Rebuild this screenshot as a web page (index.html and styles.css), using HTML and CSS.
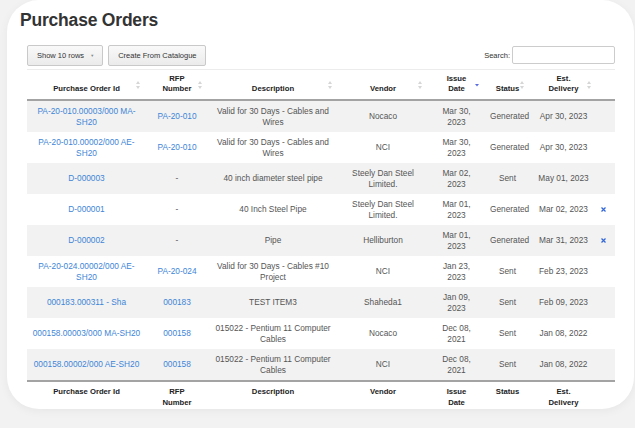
FILE: index.html
```html
<!DOCTYPE html>
<html>
<head>
<meta charset="utf-8">
<link rel="stylesheet" href="styles.css">
</head>
<body>
<div class="card">
  <h1 class="title">Purchase Orders</h1>
  <div class="toolbar">
    <div class="btns">
      <button class="btn">Show 10 rows <span class="caret">▼</span></button>
      <button class="btn">Create From Catalogue</button>
    </div>
    <label class="search">Search:<input type="text"></label>
  </div>
  <table class="grid">
    <colgroup>
      <col class="c1"><col class="c2"><col class="c3"><col class="c4"><col class="c5"><col class="c6"><col class="c7"><col class="c8">
    </colgroup>
    <thead>
      <tr>
        <th>Purchase Order Id<svg class="sort" viewBox="0 0 4 8"><path d="M2 0L4 3H0Z M2 8L4 5H0Z"/></svg></th>
        <th>RFP<br>Number<svg class="sort" viewBox="0 0 4 8"><path d="M2 0L4 3H0Z M2 8L4 5H0Z"/></svg></th>
        <th>Description<svg class="sort" viewBox="0 0 4 8"><path d="M2 0L4 3H0Z M2 8L4 5H0Z"/></svg></th>
        <th>Vendor<svg class="sort" viewBox="0 0 4 8"><path d="M2 0L4 3H0Z M2 8L4 5H0Z"/></svg></th>
        <th>Issue<br>Date<svg class="sort active" viewBox="0 0 4 8"><path d="M0 3H4L2 5.5Z"/></svg></th>
        <th>Status<svg class="sort" viewBox="0 0 4 8"><path d="M2 0L4 3H0Z M2 8L4 5H0Z"/></svg></th>
        <th>Est.<br>Delivery<svg class="sort" viewBox="0 0 4 8"><path d="M2 0L4 3H0Z M2 8L4 5H0Z"/></svg></th>
        <th></th>
      </tr>
    </thead>
    <tbody>
      <tr>
        <td><a>PA-20-010.00003/000 MA-SH20</a></td><td><a>PA-20-010</a></td>
        <td>Valid for 30 Days - Cables and Wires</td><td>Nocaco</td><td>Mar 30, 2023</td><td>Generated</td><td>Apr 30, 2023</td><td></td>
      </tr>
      <tr>
        <td><a>PA-20-010.00002/000 AE-SH20</a></td><td><a>PA-20-010</a></td>
        <td>Valid for 30 Days - Cables and Wires</td><td>NCI</td><td>Mar 30, 2023</td><td>Generated</td><td>Apr 30, 2023</td><td></td>
      </tr>
      <tr>
        <td><a>D-000003</a></td><td>-</td>
        <td>40 inch diameter steel pipe</td><td>Steely Dan Steel Limited.</td><td>Mar 02, 2023</td><td>Sent</td><td>May 01, 2023</td><td></td>
      </tr>
      <tr>
        <td><a>D-000001</a></td><td>-</td>
        <td>40 Inch Steel Pipe</td><td>Steely Dan Steel Limited.</td><td>Mar 01, 2023</td><td>Generated</td><td>Mar 02, 2023</td>
        <td><svg class="del" viewBox="0 0 6 6"><path d="M0.6 0.6L5.4 5.4M5.4 0.6L0.6 5.4"/></svg></td>
      </tr>
      <tr>
        <td><a>D-000002</a></td><td>-</td>
        <td>Pipe</td><td>Helliburton</td><td>Mar 01, 2023</td><td>Generated</td><td>Mar 31, 2023</td>
        <td><svg class="del" viewBox="0 0 6 6"><path d="M0.6 0.6L5.4 5.4M5.4 0.6L0.6 5.4"/></svg></td>
      </tr>
      <tr>
        <td><a>PA-20-024.00002/000 AE-SH20</a></td><td><a>PA-20-024</a></td>
        <td>Valid for 30 Days - Cables #10 Project</td><td>NCI</td><td>Jan 23, 2023</td><td>Sent</td><td>Feb 23, 2023</td><td></td>
      </tr>
      <tr>
        <td><a>000183.000311 - Sha</a></td><td><a>000183</a></td>
        <td>TEST ITEM3</td><td>Shaheda1</td><td>Jan 09, 2023</td><td>Sent</td><td>Feb 09, 2023</td><td></td>
      </tr>
      <tr>
        <td><a>000158.00003/000 MA-SH20</a></td><td><a>000158</a></td>
        <td>015022 - Pentium 11 Computer Cables</td><td>Nocaco</td><td>Dec 08, 2021</td><td>Sent</td><td>Jan 08, 2022</td><td></td>
      </tr>
      <tr>
        <td><a>000158.00002/000 AE-SH20</a></td><td><a>000158</a></td>
        <td>015022 - Pentium 11 Computer Cables</td><td>NCI</td><td>Dec 08, 2021</td><td>Sent</td><td>Jan 08, 2022</td><td></td>
      </tr>
    </tbody>
    <tfoot>
      <tr>
        <th>Purchase Order Id</th>
        <th>RFP<br>Number</th>
        <th>Description</th>
        <th>Vendor</th>
        <th>Issue<br>Date</th>
        <th>Status</th>
        <th>Est.<br>Delivery</th>
        <th></th>
      </tr>
    </tfoot>
  </table>
</div>
</body>
</html>
```
FILE: styles.css
```css
* { box-sizing: border-box; }
html, body { margin: 0; padding: 0; }
body {
  background: #f2f2f2;
  font-family: "Liberation Sans", Arial, sans-serif;
  width: 635px;
  height: 428px;
  overflow: hidden;
}
.card {
  margin-left: 7px;
  width: 627px;
  height: 409px;
  background: #fff;
  border-radius: 32px;
  box-shadow: 0 2px 10px rgba(0, 0, 0, 0.05);
  padding: 10px 19px 0 20px;
}
.title {
  margin: 0 0 0 -7px;
  font-size: 17.5px;
  line-height: 20px;
  font-weight: bold;
  color: #333;
  letter-spacing: -0.2px;
}
.toolbar {
  display: flex;
  justify-content: space-between;
  align-items: center;
  margin-top: 15px;
  height: 21px;
}
.btns { display: flex; gap: 5px; }
.btn {
  height: 21px;
  padding: 0 8px 0 9px;
  font-family: "Liberation Sans", Arial, sans-serif;
  font-size: 7.5px;
  color: #333;
  background: linear-gradient(#f9f9f9, #ebebeb);
  border: 1px solid #c9c9c9;
  border-radius: 2px;
}
.caret { font-size: 4px; color: #888; margin-left: 4px; vertical-align: 1px; }
.search {
  display: flex;
  align-items: center;
  gap: 2px;
  font-size: 7.5px;
  color: #333;
  margin-top: -1px;
}
.search input {
  width: 103px;
  height: 18px;
  border: 1px solid #ccc;
  border-radius: 2px;
  padding: 0;
  margin: 0;
}
.grid {
  margin-top: 3px;
  width: 588px;
  table-layout: fixed;
  border-collapse: separate;
  border-spacing: 0;
  border-top: 1px solid #ececec;
}
.c1 { width: 119px; }
.c2 { width: 62px; }
.c3 { width: 130px; }
.c4 { width: 90px; }
.c5 { width: 57px; }
.c6 { width: 45px; }
.c7 { width: 67px; }
.c8 { width: 18px; }
.grid th {
  position: relative;
  font-weight: bold;
  font-size: 7.7px;
  line-height: 10px;
  color: #222;
  text-align: center;
  padding: 4px 10px 5px;
  vertical-align: bottom;
}
.grid thead th { border-bottom: 2px solid #a3a3a3; height: 31px; }
.grid tfoot th {
  border-top: 2px solid #a3a3a3;
  vertical-align: top;
  padding-top: 4px;
  line-height: 11px;
}
.sort {
  position: absolute;
  right: 6px;
  top: 50%;
  margin-top: -4px;
  width: 4px;
  height: 8px;
  fill: #d6d6d6;
}
.sort.active { fill: #5b6ce0; }
.grid td {
  font-size: 8.3px;
  line-height: 10.5px;
  color: #555;
  text-align: center;
  vertical-align: middle;
  padding: 5px;
  height: 31px;
}
.grid td:last-child { padding: 0; }
.grid tbody tr:nth-child(odd) td { background: #f2f2f2; }
.grid a { color: #3d85d8; text-decoration: none; }
.del {
  display: block;
  margin: 0 auto 0 4px;
  width: 5px;
  height: 5px;
  stroke: #3468d6;
  stroke-width: 1.5;
  fill: none;
}
```
